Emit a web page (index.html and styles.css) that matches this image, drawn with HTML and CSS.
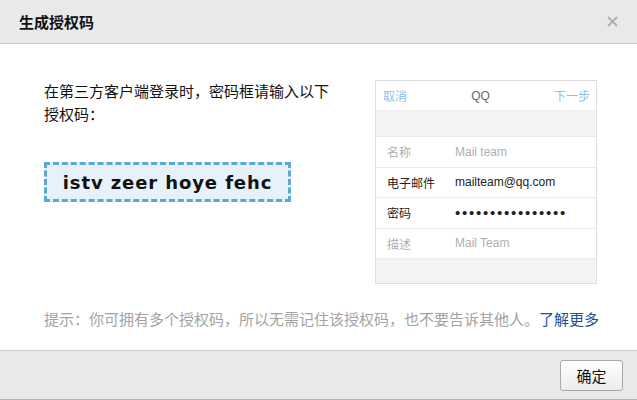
FILE: index.html
```html
<!DOCTYPE html>
<html lang="zh">
<head>
<meta charset="utf-8">
<link rel="stylesheet" href="styles.css">
</head>
<body>
<div class="dialog">
  <div class="header">
    <span class="title">生成授权码</span>
    <span class="close">
      <svg width="11" height="11" viewBox="0 0 11 11"><path d="M1 1L10 10M10 1L1 10" stroke="#b0b0b0" stroke-width="2"/></svg>
    </span>
  </div>
  <div class="body">
    <div class="top">
      <div class="left">
        <p class="desc">在第三方客户端登录时，密码框请输入以下授权码：</p>
        <div class="code">istv zeer hoye fehc</div>
      </div>
      <div class="phone">
        <div class="nav">
          <span class="nav-btn">取消</span>
          <span class="nav-title">QQ</span>
          <span class="nav-btn">下一步</span>
        </div>
        <div class="band"></div>
        <div class="rows">
          <div class="row"><span class="lbl muted">名称</span><span class="val muted">Mail team</span></div>
          <div class="row"><span class="lbl">电子邮件</span><span class="val">mailteam@qq.com</span></div>
          <div class="row"><span class="lbl">密码</span><span class="val dots">••••••••••••••••</span></div>
          <div class="row"><span class="lbl muted">描述</span><span class="val muted">Mail Team</span></div>
        </div>
        <div class="band bottom"></div>
      </div>
    </div>
    <p class="hint">提示：你可拥有多个授权码，所以无需记住该授权码，也不要告诉其他人。<a class="more">了解更多</a></p>
  </div>
  <div class="footer">
    <button class="ok">确定</button>
  </div>
</div>
</body>
</html>
```
FILE: styles.css
```css
* { box-sizing: border-box; }
html, body { margin: 0; padding: 0; }
body {
  font-family: "Liberation Sans", "Noto Sans CJK SC", sans-serif;
  color: #111;
  background: #fff;
}
.dialog {
  width: 637px;
  height: 400px;
  display: flex;
  flex-direction: column;
  border-bottom: 1px solid #b5b5b5;
}
.header {
  height: 44px;
  flex: none;
  background: #e9e9e9;
  border-bottom: 1px solid #cbcbcb;
  display: flex;
  align-items: center;
  justify-content: space-between;
  padding: 0 19px 0 19px;
}
.title {
  font-size: 15px;
  font-weight: bold;
  color: #111;
}
.close { display: flex; }
.body {
  flex: 1;
  padding: 36px 0 0 44px;
}
.top {
  display: flex;
  align-items: flex-start;
}
.left {
  width: 331px;
}
.desc {
  margin: 0;
  width: 292px;
  font-size: 15px;
  line-height: 23px;
  color: #111;
}
.code {
  margin-top: 36px;
  width: 247px;
  height: 40px;
  border: 3px dashed #5aa9d4;
  background: #e6f1f9;
  display: flex;
  align-items: center;
  justify-content: center;
  font-family: "DejaVu Sans", sans-serif;
  font-weight: bold;
  font-size: 18px;
  letter-spacing: 0.9px;
  color: #111;
}
.phone {
  width: 222px;
  height: 204px;
  border: 1px solid #dedede;
  background: #fff;
  display: flex;
  flex-direction: column;
  font-size: 12px;
}
.nav {
  height: 30px;
  display: flex;
  align-items: center;
  justify-content: space-between;
  padding: 0 6px 0 7px;
  border-bottom: 1px solid #ececec;
}
.nav-btn { color: #8cbfec; }
.nav-title { color: #666; font-size: 12px; }
.band {
  height: 25px;
  background: #f4f4f6;
}
.band.bottom { flex: 1; border-top: 1px solid #ececec; }
.rows { display: flex; flex-direction: column; }
.row {
  height: 30.5px;
  display: flex;
  align-items: center;
  padding-left: 11px;
  border-top: 1px solid #ececec;
  white-space: nowrap;
}
.lbl {
  flex: none;
  width: 68px;
  color: #222;
}
.val { color: #222; }
.muted { color: #b0b0b0; }
.dots {
  font-family: "Liberation Sans", sans-serif;
  font-size: 15px;
  line-height: 1;
  letter-spacing: 1.75px;
}
.hint {
  margin: 24px 0 0;
  font-size: 15px;
  line-height: 23px;
  color: #a3a3a3;
}
.more { color: #1d4f97; }
.footer {
  height: 49px;
  flex: none;
  background: #e9e9e9;
  border-top: 1px solid #cbcbcb;
  display: flex;
  align-items: center;
  justify-content: flex-end;
  padding-right: 14px;
}
.ok {
  width: 63px;
  height: 31px;
  border: 1px solid #a8a8a8;
  border-radius: 3px;
  background: linear-gradient(#ffffff, #ececec);
  font-family: "Liberation Sans", "Noto Sans CJK SC", sans-serif;
  font-size: 15px;
  color: #111;
  padding: 0;
}
```
